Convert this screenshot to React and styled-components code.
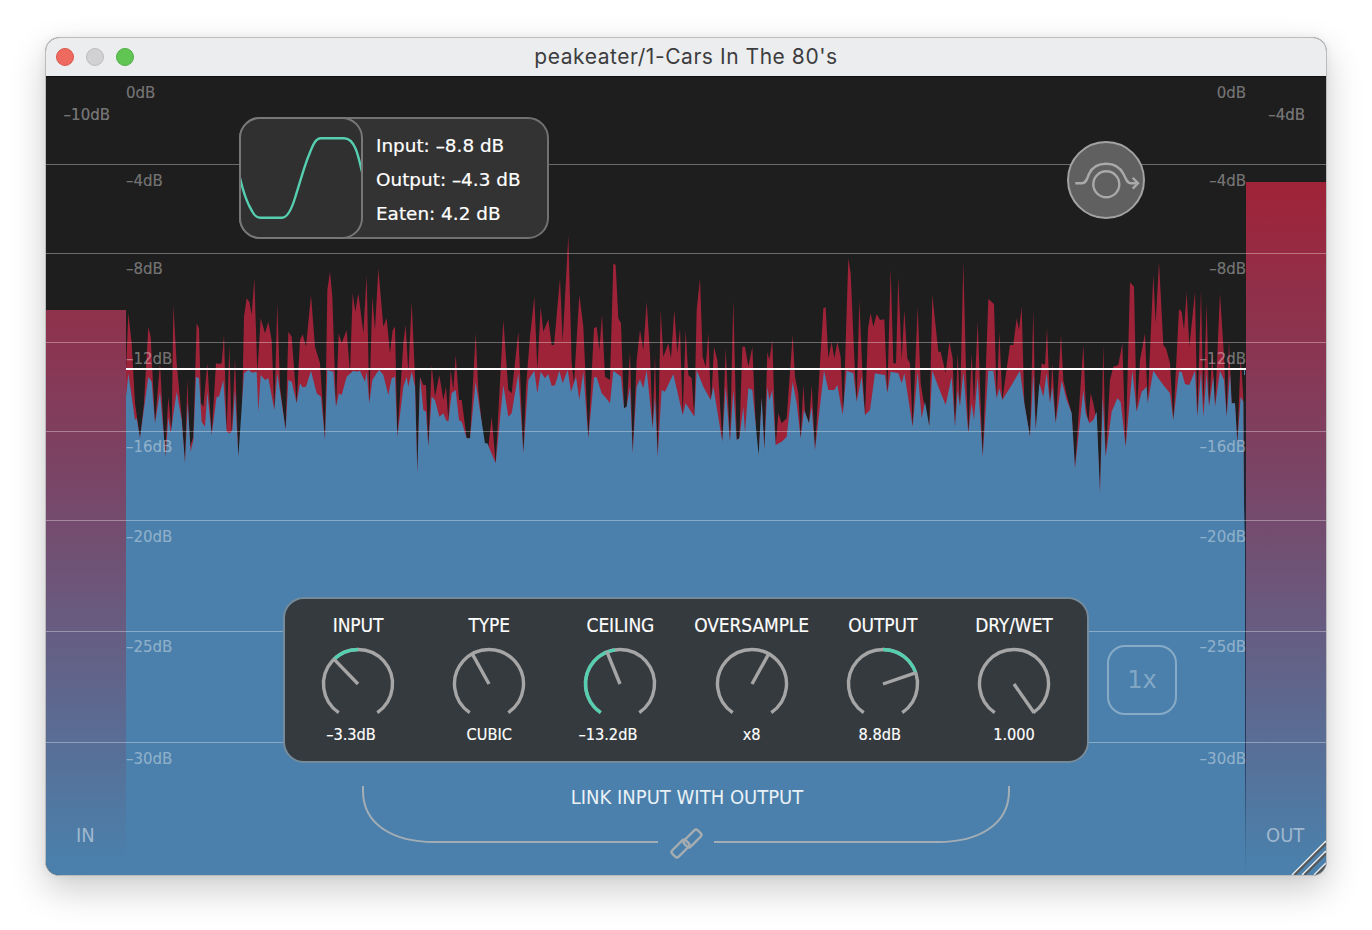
import React from "react";
import styled, { createGlobalStyle } from "styled-components";

const Global = createGlobalStyle`
  html, body { margin: 0; padding: 0; background: #fff; }
  * { box-sizing: border-box; }
`;

const UI = `"DejaVu Sans", "Liberation Sans", sans-serif`;
const NARROW = `"DejaVu Sans Condensed", "DejaVu Sans", sans-serif`;
const RED = "#9e2339";
const BLUE = "#4a80ab";
const TEAL = "#56cfb0";

/* traced waveform, [x, y] pairs grouped by horizontal offset */
const conv = (off, pts) => pts.map(([x, y]) => [off + x / 3, 230 + y / 3]);

const redTop = [
  ...conv(120, [[18,420],[25,250],[35,340],[45,520],[60,625],[72,520],[85,290],[92,320],[100,480],[105,580],[120,400],[135,680],[145,500],[155,610],[160,225],[170,400],[185,560],[195,700],[202,450],[210,650],[220,620],[230,280],[237,295],[243,520],[250,530],[262,400],[275,615],[288,400],[297,402],[305,400],[312,315],[320,600],[328,345],[335,610],[345,385],[355,680],[365,600],[372,260],[380,205],[388,215],[395,255],[403,145],[412,430],[422,265],[435,310],[445,275],[455,330],[463,540],[472,220],[480,470],[497,600],[505,305],[515,320],[530,520],[540,330],[548,313],[558,350],[573,195],[585,350],[600,400],[615,630],[622,180],[630,125],[637,200],[648,530],[656,310],[665,340],[680,300],[690,430],[698,190],[706,245],[715,190],[730,310],[740,135],[748,520],[757,200],[765,300],[775,115],[790,290],[800,265],[810,370],[818,300],[825,290],[832,620],[850,340],[857,285],[865,430],[875,215],[885,440],[892,730],[900,440],[910,465],[918,465],[925,650],[935,405],[945,500],[958,435],[970,510],[978,470],[985,570],[992,420],[1000,480],[1007,375],[1017,510],[1025,510],[1040,625],[1050,625],[1067,310],[1075,480],[1095,675],[1102,680],[1115,560],[1127,700],[1150,270],[1165,480],[1175,490],[1195,305]]),
  ...conv(500, [[70,670],[78,470],[90,320],[103,200],[112,420],[122,230],[130,305],[145,268],[155,345],[162,345],[180,145],[188,335],[205,15],[215,400],[222,460],[238,195],[250,290],[265,625],[282,295],[290,290],[298,360],[306,255],[315,440],[330,450],[340,100],[347,105],[355,265],[363,280],[372,535],[380,530],[390,365],[398,670],[410,390],[420,300],[430,360],[440,215],[450,370],[458,595],[465,375],[473,680],[482,240],[490,380],[505,340],[513,385],[523,240],[532,370],[540,295],[548,555],[557,300],[565,435],[575,445],[583,560],[590,240],[600,145],[608,380],[617,410],[625,310],[633,530],[642,350],[652,390],[667,635],[677,355],[690,635],[700,210],[710,630],[718,625],[727,350],[735,350],[745,410],[757,350],[770,650],[776,675],[785,500],[793,660],[802,365],[808,390],[817,330],[827,645],[835,550],[845,580],[860,565],[878,315],[885,440],[895,490],[902,625],[910,465],[915,545],[927,580],[935,465],[945,660],[960,400],[970,235],[977,232],[985,385],[995,335],[1003,385],[1012,335],[1022,380],[1030,560],[1045,85],[1052,130],[1065,430],[1070,515],[1078,210],[1087,420],[1095,555],[1104,295],[1112,250],[1120,290],[1130,252],[1140,270],[1153,268],[1162,490],[1172,115],[1180,400],[1188,400],[1195,140]]),
  ...conv(880, [[65,390],[73,240],[82,385],[90,400],[98,590],[113,230],[122,460],[130,510],[148,590],[157,195],[175,365],[182,365],[197,430],[208,335],[218,385],[225,590],[233,370],[240,530],[250,95],[258,420],[265,610],[275,370],[282,520],[293,275],[308,680],[325,207],[342,222],[350,505],[358,305],[367,510],[390,345],[400,345],[410,265],[417,300],[425,230],[433,520],[450,620],[460,240],[467,600],[485,400],[495,405],[501,295],[510,520],[517,400],[527,580],[543,315],[550,450],[560,495],[575,550],[585,715],[610,345],[617,520],[625,580],[632,490],[640,520],[650,570],[660,790],[670,345],[677,680],[690,450],[700,410],[715,405],[727,340],[737,650],[750,157],[762,170],[770,545],[780,390],[795,310],[803,520],[820,135],[827,280],[837,95],[850,345],[858,355],[870,400],[880,570],[897,237],[905,245],[912,300],[920,185],[928,350],[945,185],[952,560],[963,180],[970,530],[980,220],[987,530],[997,370],[1005,530],[1020,190],[1032,380],[1040,560],[1047,330],[1055,520],[1065,520],[1072,640],[1082,380],[1090,500],[1092,810]]),
];

const blueTop = [
  ...conv(120, [[18,500],[25,430],[45,570],[50,565],[60,625],[85,440],[95,455],[105,580],[120,485],[137,680],[145,560],[152,610],[170,485],[185,570],[195,700],[203,520],[212,665],[220,630],[228,440],[237,445],[245,575],[255,590],[262,485],[275,615],[290,500],[297,500],[310,450],[320,605],[330,610],[337,600],[345,480],[355,680],[372,430],[385,420],[397,428],[410,425],[415,545],[422,435],[435,450],[445,445],[463,540],[472,430],[497,600],[505,450],[515,455],[530,520],[540,460],[548,472],[558,470],[573,422],[590,490],[603,500],[615,630],[622,420],[640,425],[648,530],[657,490],[665,495],[680,440],[700,422],[710,425],[720,422],[735,455],[740,425],[748,520],[757,450],[770,430],[778,420],[790,435],[805,495],[815,445],[825,440],[832,620],[850,470],[860,440],[865,470],[875,425],[885,470],[892,730],[900,440],[910,540],[918,545],[925,650],[935,500],[945,510],[958,560],[970,550],[978,570],[985,575],[995,490],[1007,480],[1017,570],[1025,575],[1040,625],[1050,625],[1067,455],[1075,510],[1095,640],[1102,640],[1127,700],[1150,465],[1165,560],[1175,550],[1195,430]]),
  ...conv(500, [[70,670],[85,450],[103,422],[112,490],[122,425],[135,445],[145,432],[155,468],[165,466],[178,422],[188,460],[203,420],[213,485],[228,440],[238,510],[250,425],[265,625],[282,442],[290,442],[305,490],[315,500],[330,520],[340,422],[363,440],[372,535],[380,530],[390,470],[398,670],[410,470],[420,447],[430,475],[440,420],[458,595],[465,500],[473,680],[485,480],[495,485],[520,432],[548,555],[557,520],[583,560],[590,420],[610,470],[632,510],[640,470],[667,635],[677,470],[690,635],[700,480],[710,630],[718,625],[730,530],[735,610],[745,475],[757,480],[776,675],[785,505],[793,660],[802,470],[808,510],[817,480],[827,645],[845,635],[860,620],[878,455],[890,520],[902,625],[912,540],[927,580],[935,530],[945,660],[972,422],[985,480],[1003,480],[1012,465],[1028,555],[1040,422],[1060,430],[1070,515],[1085,440],[1095,555],[1110,540],[1125,430],[1135,432],[1155,435],[1162,490],[1172,425],[1195,430]]),
  ...conv(880, [[65,460],[73,430],[98,590],[113,425],[125,565],[135,515],[148,590],[157,422],[175,470],[197,525],[215,440],[225,590],[233,480],[240,530],[250,425],[265,610],[275,520],[282,570],[293,440],[308,680],[325,422],[340,422],[350,505],[358,475],[367,510],[395,465],[420,422],[433,520],[450,620],[460,430],[467,600],[478,460],[490,500],[500,430],[510,520],[517,470],[527,580],[545,452],[560,510],[575,550],[585,715],[610,480],[617,550],[628,580],[640,570],[650,545],[660,790],[668,500],[677,680],[695,545],[712,505],[722,515],[737,650],[757,422],[770,545],[785,485],[800,470],[803,520],[820,422],[835,445],[850,465],[870,490],[880,570],[897,425],[905,425],[915,462],[928,465],[945,422],[952,560],[963,425],[970,560],[980,430],[987,530],[1000,440],[1005,530],[1020,422],[1032,450],[1040,560],[1050,430],[1055,520],[1065,520],[1072,640],[1082,500],[1090,515],[1092,810]]),
];

const poly = (pts) => {
  const first = pts[0][0];
  const last = pts[pts.length - 1][0];
  return `${first},876 ` + pts.map((p) => p.join(",")).join(" ") + ` ${last},876`;
};

const SCALE = [
  { label: "0dB", line: null, y: 93 },
  { label: "–4dB", line: 164, y: 181 },
  { label: "–8dB", line: 253, y: 269 },
  { label: "–12dB", line: 342, y: 359 },
  { label: "–16dB", line: 431, y: 447 },
  { label: "–20dB", line: 520, y: 537 },
  { label: "–25dB", line: 631, y: 647 },
  { label: "–30dB", line: 742, y: 759 },
];

const KNOBS = [
  { name: "INPUT", value: "–3.3dB", angle: -44, from: -44, to: 0, nudge: 14 },
  { name: "TYPE", value: "CUBIC", angle: -29 },
  { name: "CEILING", value: "–13.2dB", angle: -22, from: -146, to: -8, nudge: 25 },
  { name: "OVERSAMPLE", value: "x8", angle: 29 },
  { name: "OUTPUT", value: "8.8dB", angle: 71, from: 0, to: 71, nudge: 6 },
  { name: "DRY/WET", value: "1.000", angle: 145 },
];

const Page = styled.div`
  width: 1372px;
  height: 930px;
  padding: 37px 45px 54px;
  background: #fff;
  overflow: hidden;
`;

const Window = styled.div`
  width: 1282px;
  height: 839px;
  border: 1px solid #bcbcbc;
  border-radius: 14px;
  overflow: hidden;
  display: flex;
  flex-direction: column;
  background: #1e1e1e;
  box-shadow: 0 14px 36px rgba(0, 0, 0, 0.2), 0 0 10px rgba(0, 0, 0, 0.06);
`;

const TitleBar = styled.header`
  position: relative;
  height: 39px;
  flex: none;
  display: flex;
  align-items: center;
  justify-content: center;
  padding-bottom: 2px;
  background: #ecedef;
  border-bottom: 1px solid #111;
`;

const Lights = styled.div`
  position: absolute;
  left: 10px;
  top: 10px;
  display: flex;
  gap: 12px;
`;

const Light = styled.span`
  width: 18px;
  height: 18px;
  border-radius: 50%;
  background: ${(p) => p.$color};
  border: 1px solid ${(p) => p.$edge};
`;

const Title = styled.h1`
  margin: 0;
  font: 400 21px "Inter", "Liberation Sans", sans-serif;
  letter-spacing: 0.55px;
  color: #3d3d3f;
`;

const Display = styled.main`
  position: relative;
  flex: 1;
  display: grid;
  grid-template-columns: 80px 1120px 80px;
  min-height: 0;
  font-family: ${UI};
`;

const MeterColumn = styled.div`
  position: relative;
  display: flex;
  flex-direction: column;
  justify-content: flex-end;
`;

const MeterFill = styled.div`
  height: ${(p) => p.$height}px;
  background: linear-gradient(to top, ${BLUE} 0, ${BLUE} 14px, #7c4263 415px, #9f2338 693px) bottom / 100% 693px no-repeat;
`;

const MeterName = styled.span`
  position: absolute;
  bottom: 28px;
  left: ${(p) => p.$left}px;
  font: 400 20px ${NARROW};
  color: rgba(255, 255, 255, 0.47);
`;

const MeterPeak = styled.span`
  position: absolute;
  top: 29px;
  right: ${(p) => p.$right}px;
  font: 400 15px ${UI};
  line-height: 18px;
  color: rgba(255, 255, 255, 0.4);
  -webkit-text-stroke: 0.2px rgba(255, 255, 255, 0.3);
`;

const Chart = styled.div`
  position: relative;
  overflow: hidden;
`;

const Wave = styled.svg`
  display: block;
  width: 1120px;
  height: 798px;
`;

const ScaleLine = styled.div`
  position: absolute;
  left: 0;
  right: 0;
  top: ${(p) => p.$y - 77}px;
  height: 1px;
  background: rgba(255, 255, 255, 0.34);
  pointer-events: none;
`;

const ScaleLabel = styled.span`
  position: absolute;
  top: ${(p) => p.$y - 77 - 9}px;
  ${(p) => (p.$side === "left" ? "left: 80px;" : "right: 80px;")}
  font: 400 15px ${UI};
  line-height: 18px;
  color: rgba(255, 255, 255, 0.38);
  -webkit-text-stroke: 0.2px rgba(255, 255, 255, 0.25);
`;

const Ceiling = styled.div`
  position: absolute;
  left: 80px;
  width: 1120px;
  top: 291px;
  height: 2px;
  background: #fff;
`;

const InfoBox = styled.section`
  position: absolute;
  left: 193px;
  top: 40px;
  width: 310px;
  height: 122px;
  display: flex;
  background: #333;
  border: 2px solid #717171;
  border-radius: 21px;
`;

const CurveBox = styled.div`
  width: 124px;
  height: 122px;
  margin: -2px 0 0 -2px;
  flex: none;
  background: #303030;
  border: 2px solid #777;
  border-radius: 21px;
  overflow: hidden;
`;

const CurveArt = styled.svg`
  display: block;
`;

const Readout = styled.div`
  display: flex;
  flex-direction: column;
  padding: 10px 0 0 13px;
  font: 400 18.4px ${UI};
  line-height: 34px;
  color: #fff;
  white-space: nowrap;
  -webkit-text-stroke: 0.2px #fff;
`;

const Bypass = styled.button`
  position: absolute;
  left: 1021px;
  top: 64px;
  width: 78px;
  height: 78px;
  padding: 0;
  display: grid;
  place-items: center;
  background: #606060;
  border: 2px solid #a3a3a3;
  border-radius: 50%;
`;

const Controls = styled.section`
  position: absolute;
  left: 237px;
  top: 520px;
  width: 806px;
  height: 166px;
  display: flex;
  justify-content: center;
  padding-top: 15px;
  background: #353a3e;
  border: 2px solid #758a9b;
  border-radius: 21px;
`;

const KnobCell = styled.div`
  width: 131.2px;
  display: flex;
  flex-direction: column;
  align-items: center;
`;

const KnobName = styled.div`
  height: 22px;
  font: 400 19px ${NARROW};
  letter-spacing: -0.1px;
  line-height: 22px;
  color: #fff;
  white-space: nowrap;
  -webkit-text-stroke: 0.15px #fff;
`;

const KnobDial = styled.svg`
  display: block;
  margin: 10px 0 3px;
`;

const KnobValue = styled.div`
  height: 20px;
  margin-right: ${(p) => p.$nudge || 0}px;
  font: 400 16.2px ${NARROW};
  line-height: 20px;
  color: #fff;
  white-space: nowrap;
  -webkit-text-stroke: 0.15px #fff;
`;

const RateButton = styled.button`
  position: absolute;
  left: 1061px;
  top: 568px;
  width: 70px;
  height: 70px;
  padding: 0;
  background: transparent;
  border: 2px solid rgba(255, 255, 255, 0.34);
  border-radius: 18px;
  font: 400 24px ${UI};
  color: rgba(255, 255, 255, 0.32);
`;

const LinkGroup = styled.div`
  position: absolute;
  left: 316px;
  top: 708px;
  width: 650px;
  height: 74px;
  display: grid;
  justify-items: center;
`;

const LinkLabel = styled.div`
  grid-area: 1 / 1;
  margin-top: 1px;
  font: 400 20px ${NARROW};
  line-height: 22px;
  color: #eaf1f6;
`;

const LinkArt = styled.svg`
  grid-area: 1 / 1;
  display: block;
`;

const Grip = styled.svg`
  position: absolute;
  right: 0;
  bottom: 0;
`;

const polar = (cx, cy, r, deg) => {
  const a = (deg * Math.PI) / 180;
  return [cx + r * Math.sin(a), cy - r * Math.cos(a)];
};

const arc = (cx, cy, r, from, to) => {
  const [x0, y0] = polar(cx, cy, r, from);
  const [x1, y1] = polar(cx, cy, r, to);
  const large = to - from > 180 ? 1 : 0;
  return `M${x0} ${y0}A${r} ${r} 0 ${large} 1 ${x1} ${y1}`;
};

function Knob({ name, value, angle, from, to, nudge }) {
  const [tx, ty] = polar(38, 38, 35, angle);
  return (
    <KnobCell>
      <KnobName>{name}</KnobName>
      <KnobDial width="76" height="76" viewBox="0 0 76 76" fill="none" strokeWidth="3.4">
        <path d={arc(38, 38, 34.5, -146, 146)} stroke="#a6a6a6" />
        {from !== undefined && <path d={arc(38, 38, 34.5, from, to)} stroke={TEAL} />}
        <line x1="38" y1="38" x2={tx} y2={ty} stroke="#a6a6a6" />
      </KnobDial>
      <KnobValue $nudge={nudge}>{value}</KnobValue>
    </KnobCell>
  );
}

export default function App() {
  return (
    <Page>
      <Global />
      <Window>
        <TitleBar>
          <Lights>
            <Light $color="#ee6a5f" $edge="#d8584e" />
            <Light $color="#d1d1d3" $edge="#bdbdbf" />
            <Light $color="#61c554" $edge="#52ad47" />
          </Lights>
          <Title>peakeater/1-Cars In The 80's</Title>
        </TitleBar>
        <Display>
          <MeterColumn>
            <MeterFill $height={565} />
            <MeterPeak $right={16}>–10dB</MeterPeak>
            <MeterName $left={30}>IN</MeterName>
          </MeterColumn>
          <Chart>
            <Wave viewBox="126 77 1120 798">
              <defs>
                <linearGradient id="edgeA" x1="0" y1="0" x2="0" y2="1">
                  <stop offset="0" stopColor="#1e1e1e" />
                  <stop offset="0.75" stopColor="#1e2430" />
                  <stop offset="1" stopColor={BLUE} />
                </linearGradient>
                <linearGradient id="edgeB" x1="0" y1="0" x2="0" y2="1">
                  <stop offset="0" stopColor="#1e1e1e" />
                  <stop offset="0.3" stopColor="#1f2638" />
                  <stop offset="0.75" stopColor="#2a3a5c" />
                  <stop offset="1" stopColor={BLUE} />
                </linearGradient>
              </defs>
              <polygon points={poly(redTop)} fill={RED} />
              <polygon points={poly(blueTop)} fill={BLUE} />
              <rect x="1244" y="370" width="1" height="506" fill={BLUE} />
              <rect x="1244" y="375" width="1" height="170" fill="url(#edgeA)" />
              <rect x="1245" y="375" width="1" height="500" fill="url(#edgeB)" />
            </Wave>
          </Chart>
          <MeterColumn>
            <MeterFill $height={693} />
            <MeterPeak $right={21}>–4dB</MeterPeak>
            <MeterName $left={20}>OUT</MeterName>
          </MeterColumn>

          {SCALE.filter((s) => s.line).map((s) => (
            <ScaleLine key={s.label} $y={s.line} />
          ))}
          {SCALE.map((s) => (
            <React.Fragment key={s.label}>
              <ScaleLabel $side="left" $y={s.y}>{s.label}</ScaleLabel>
              <ScaleLabel $side="right" $y={s.y}>{s.label}</ScaleLabel>
            </React.Fragment>
          ))}
          <Ceiling />

          <InfoBox>
            <CurveBox>
              <CurveArt width="120" height="118" viewBox="0 0 120 118" fill="none">
                <path
                  d="M-1 59C2 72 6 84 11 92C13 96 15 98.700 19 98.700H41C46 98.700 50 92 54 79C60 60 64 45 68 36C71 28 74 19.300 80 19.300H103C108 19.300 112 24 114.400 29.300C117 35 119 44 121 53"
                  stroke={TEAL}
                  strokeWidth="2.400"
                />
              </CurveArt>
            </CurveBox>
            <Readout>
              <span>Input: –8.8 dB</span>
              <span>Output: –4.3 dB</span>
              <span>Eaten: 4.2 dB</span>
            </Readout>
          </InfoBox>

          <Bypass aria-label="Bypass">
            <svg width="74" height="74" viewBox="0 0 74 74" fill="none" stroke="#a9a9a9" strokeWidth="2.400">
              <circle cx="37.300" cy="41.300" r="13" />
              <path d="M6.300 40.300H13C17 40.300 18 36 20 31C23 24 29 20.700 37.300 20.700C45.700 20.700 51 24 54.500 31C57 36 58 40.300 62 40.300H69" />
              <path d="M63.700 34.700L69 40.300L63.700 45.700" />
            </svg>
          </Bypass>

          <Controls>
            {KNOBS.map((k) => (
              <Knob key={k.name} {...k} />
            ))}
          </Controls>

          <RateButton>1x</RateButton>

          <LinkGroup>
            <LinkArt width="650" height="74" viewBox="0 0 650 74" fill="none" stroke="#a3adb5" strokeWidth="2">
              <path d="M1 1V6C1 40 32 57 72 57H296" />
              <path d="M647 1V6C647 40 616 57 576 57H352" />
              <g stroke="#a6acb0" strokeWidth="2.400">
                <rect x="-4.500" y="-9.500" width="9" height="19" rx="2.500" transform="translate(330.500 53.500) rotate(45)" />
                <rect x="-4.500" y="-9.500" width="9" height="19" rx="2.500" transform="translate(318.500 63.500) rotate(45)" />
              </g>
            </LinkArt>
            <LinkLabel>LINK INPUT WITH OUTPUT</LinkLabel>
          </LinkGroup>

          <Grip width="36" height="36" viewBox="0 0 36 36" fill="none">
            <path d="M2 36L36 2" stroke="#ececec" strokeWidth="1.600" />
            <path d="M4.500 36L36 4.500" stroke="#565656" strokeWidth="2.200" />
            <path d="M12 36L36 12" stroke="#ececec" strokeWidth="1.600" />
            <path d="M14.500 36L36 14.500" stroke="#565656" strokeWidth="2.200" />
            <path d="M24 36L36 24" stroke="#ececec" strokeWidth="1.600" />
            <path d="M26.500 36L36 26.500" stroke="#565656" strokeWidth="2.200" />
          </Grip>
        </Display>
      </Window>
    </Page>
  );
}
